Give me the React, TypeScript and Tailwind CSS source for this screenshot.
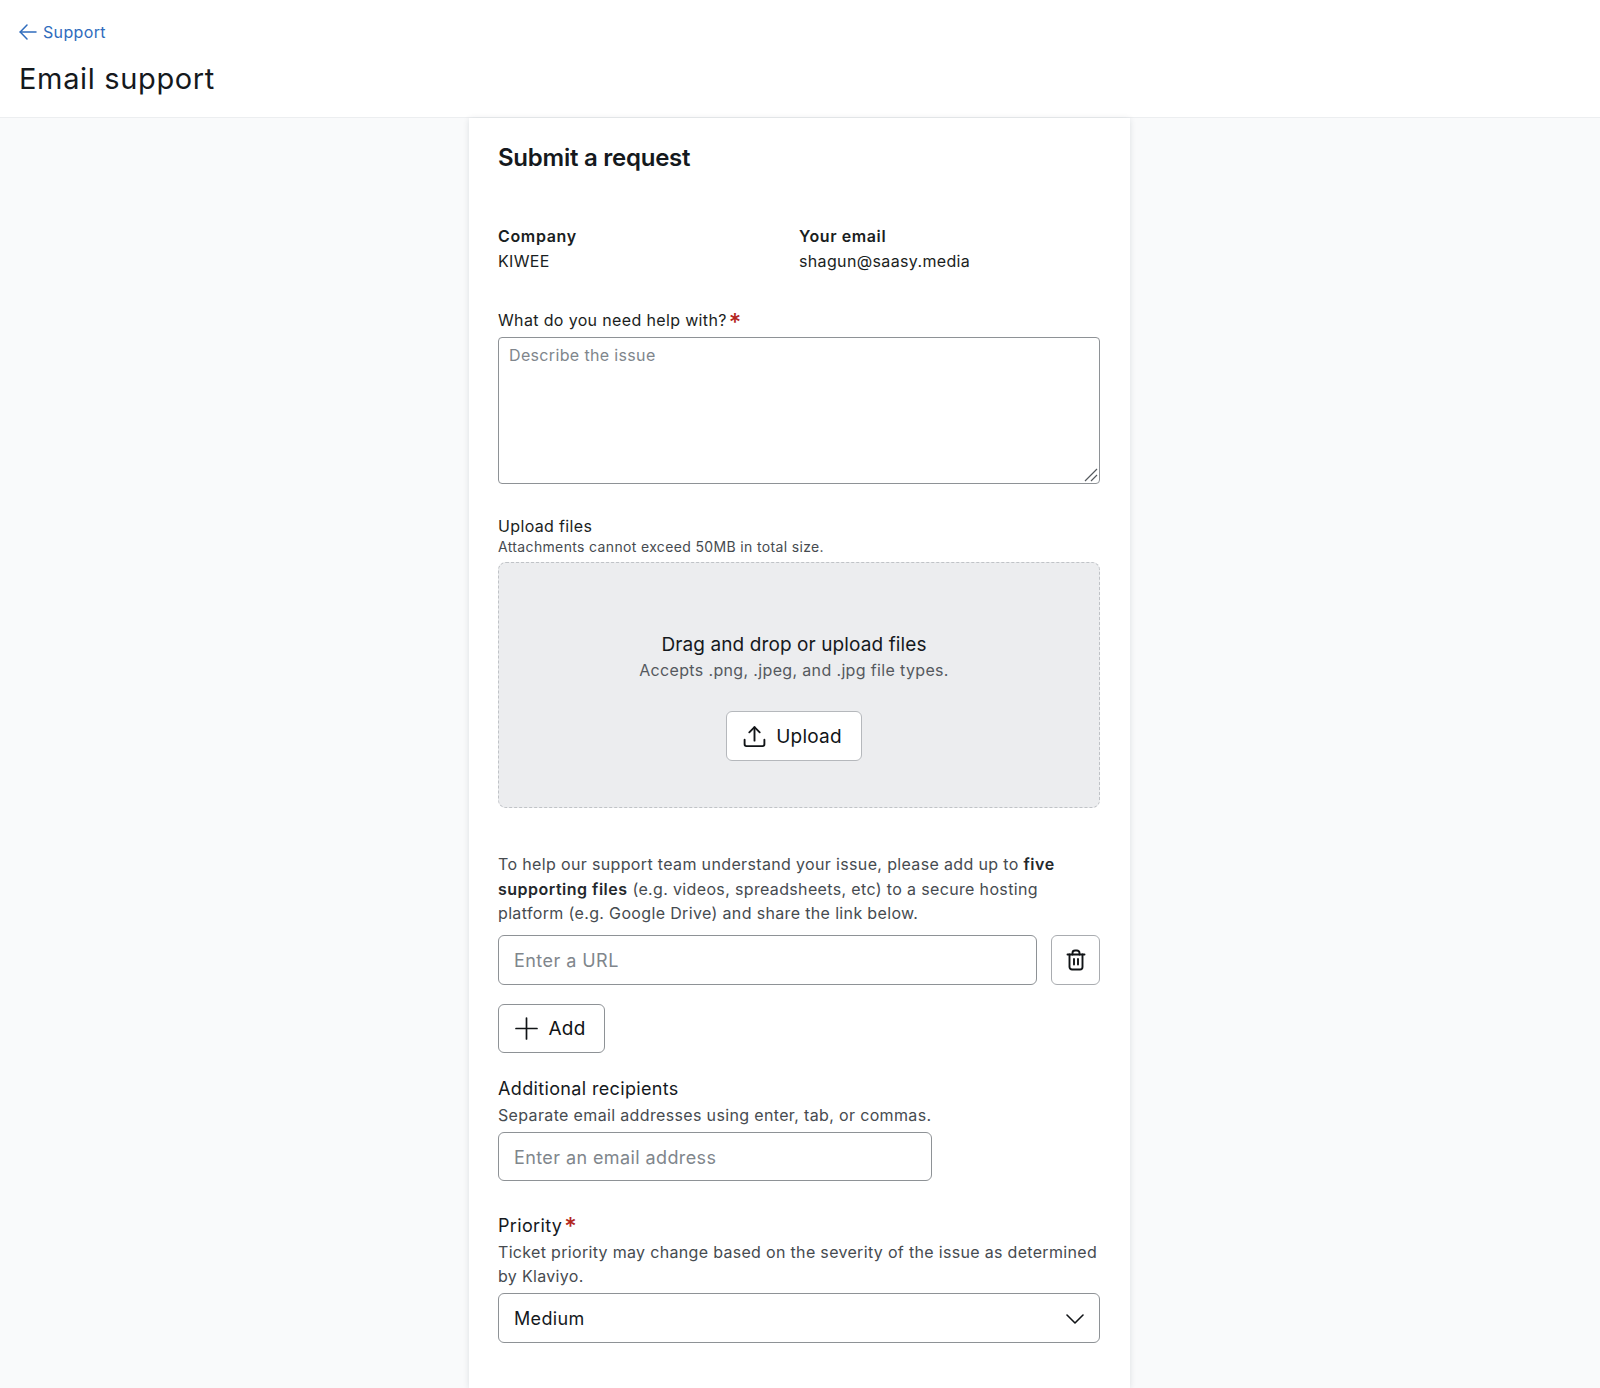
import React from 'react';

const font = "font-['Inter',sans-serif]";

const Required = ({ raised }: { raised?: boolean }) => (
  <span className={`ml-[2px] text-[24px] font-medium leading-[0] text-[#b3261e] relative ${raised ? 'top-[3px]' : 'top-[5px]'}`}>*</span>
);

const BackArrow = () => (
  <svg width="18" height="16" viewBox="0 0 18 16" fill="none" stroke="#2f6cbd" strokeWidth="1.5" strokeLinecap="round" strokeLinejoin="round">
    <path d="M17 8H1.2" />
    <path d="M8 1L1.2 8 8 15" />
  </svg>
);

const UploadIcon = () => (
  <svg width="25" height="25" viewBox="0 0 24 24" fill="none" stroke="#111417" strokeWidth="1.8" strokeLinecap="round" strokeLinejoin="round">
    <path d="M12 16V3" />
    <path d="M7 8l5-5 5 5" />
    <path d="M2.5 15v4.5c0 1 .7 1.7 1.7 1.7h15.6c1 0 1.7-.7 1.7-1.7V15" />
  </svg>
);

const TrashIcon = () => (
  <svg width="24" height="24" viewBox="0 0 24 24" fill="none" stroke="#111417" strokeWidth="1.9" strokeLinecap="round" strokeLinejoin="round">
    <path d="M3.5 6.5h17" />
    <path d="M8.5 6.5V5a2.5 2.5 0 0 1 2.5-2.5h2A2.5 2.5 0 0 1 15.5 5v1.5" />
    <path d="M5.5 6.5v12.5a2.5 2.5 0 0 0 2.5 2.5h8a2.5 2.5 0 0 0 2.5-2.5V6.5" />
    <path d="M10 11v5.5M14 11v5.5" />
  </svg>
);

const PlusIcon = () => (
  <svg width="23" height="23" viewBox="0 0 23 23" fill="none" stroke="#111417" strokeWidth="1.7" strokeLinecap="round">
    <path d="M11.5 1v21M1 11.5h21" />
  </svg>
);

const ChevronIcon = () => (
  <svg width="18" height="10" viewBox="0 0 18 10" fill="none" stroke="#111417" strokeWidth="1.6" strokeLinecap="round" strokeLinejoin="round">
    <path d="M1 1l8 8 8-8" />
  </svg>
);

export default function App() {
  return (
    <div className={`${font} min-h-[1388px] bg-[#f9fafb] text-[#1a1e22] tracking-[0.35px] overflow-hidden`}>
      <header className="h-[118px] bg-white border-b border-[#eceef0] px-[19px] pt-[20px]">
        <a className="flex items-center gap-[6px] text-[16px] leading-[24px] text-[#2f6cbd]">
          <BackArrow />
          <span>Support</span>
        </a>
        <h1 className="mt-[15px] text-[29px] leading-[40px] font-normal tracking-[0.65px] text-[#15191d]">Email support</h1>
      </header>

      <main className="flex justify-center">
        <div className="w-[661px] h-[1270px] bg-white pl-[29px] pr-[30px] shadow-[0_1px_6px_rgba(20,30,50,0.12)] ml-[-1px]">
          <h2 className="pt-[22px] text-[24px] leading-[36px] font-[580] tracking-[-0.25px] text-[#15191d]">Submit a request</h2>

          <div className="mt-[48px] grid grid-cols-2 text-[16px] leading-[25px]">
            <div>
              <div className="font-[580] tracking-[0.65px]">Company</div>
              <div>KIWEE</div>
            </div>
            <div>
              <div className="font-[580] tracking-[0.6px]">Your email</div>
              <div>shagun@saasy.media</div>
            </div>
          </div>

          <label className="block mt-[34px] text-[16px] leading-[24px]">What do you need help with?<Required /></label>
          <div className="relative mt-[5px]">
            <textarea
              placeholder="Describe the issue"
              className="block w-full h-[147px] resize-none rounded-[4px] border border-[#8e9296] bg-white px-[10px] py-[5px] text-[16px] leading-[24px] placeholder:text-[#80868c] outline-none"
            />
            <svg className="absolute right-[2px] bottom-[2px]" width="14" height="14" viewBox="0 0 14 14" fill="none" stroke="#55595e" strokeWidth="1.2">
              <path d="M1 13L13 1M7 13l6-6" />
            </svg>
          </div>

          <div className="mt-[30px] text-[16px] leading-[24px]">Upload files</div>
          <div className="text-[14px] leading-[20px] text-[#464b50] -mt-[1px]">Attachments cannot exceed 50MB in total size.</div>

          <div className="mt-[5px] h-[246px] rounded-[8px] border border-dashed border-[#c0c3c7] bg-[#ecedef] flex flex-col items-center pt-[68px] pr-[10px]">
            <div className="text-[19px] leading-[28px] tracking-[0.1px] text-[#15191d]">Drag and drop or upload files</div>
            <div className="-mt-[1px] text-[16px] leading-[24px] text-[#55595e]">Accepts .png, .jpeg, and .jpg file types.</div>
            <button className="mt-[29px] w-[136px] h-[50px] rounded-[6px] border border-[#b5b8bc] bg-white flex items-center justify-center gap-[9px] pr-[4px] text-[19px] tracking-[0.2px] text-[#111417]">
              <UploadIcon />
              <span className="relative top-[1px]">Upload</span>
            </button>
          </div>

          <p className="mt-[44px] text-[16px] leading-[24.5px] text-[#464b50]">
            To help our support team understand your issue, please add up to <strong className="font-semibold tracking-[0.5px] text-[#24282c]">five supporting files</strong> (e.g. videos, spreadsheets, etc) to a secure hosting platform (e.g. Google Drive) and share the link below.
          </p>

          <div className="mt-[9px] flex gap-[14px]">
            <input
              placeholder="Enter a URL"
              className="flex-1 h-[50px] rounded-[6px] border border-[#8e9296] bg-white px-[15px] pt-[2px] text-[18px] tracking-[0.45px] placeholder:text-[#80868c] outline-none"
            />
            <button className="w-[49px] h-[50px] rounded-[6px] border border-[#a9acb0] bg-white flex items-center justify-center">
              <TrashIcon />
            </button>
          </div>

          <button className="mt-[19px] w-[107px] h-[49px] rounded-[6px] border border-[#8e9296] bg-white flex items-center justify-center gap-[11px] pr-[3px] text-[19px] tracking-[0.2px] text-[#111417]">
            <PlusIcon />
            <span className="relative top-[1px]">Add</span>
          </button>

          <div className="mt-[23px] text-[18px] leading-[26px] text-[#15191d]">Additional recipients</div>
          <div className="mt-[1px] text-[16px] leading-[24px] text-[#464b50]">Separate email addresses using enter, tab, or commas.</div>
          <input
            placeholder="Enter an email address"
            className="block mt-[5px] w-[434px] h-[49px] rounded-[6px] border border-[#8e9296] bg-white px-[15px] pt-[2px] text-[18px] tracking-[0.4px] placeholder:text-[#80868c] outline-none"
          />

          <div className="mt-[32px] text-[18px] leading-[26px] text-[#15191d]">Priority<Required raised /></div>
          <p className="mt-[1px] text-[16px] leading-[24.5px] tracking-[0.32px] text-[#464b50]">
            Ticket priority may change based on the severity of the issue as determined by Klaviyo.
          </p>
          <div className="mt-[4px] h-[50px] rounded-[6px] border border-[#8e9296] bg-white pl-[15px] pr-[15px] pt-[2px] flex items-center justify-between text-[18px] text-[#15191d]">
            <span>Medium</span>
            <ChevronIcon />
          </div>
        </div>
      </main>
    </div>
  );
}
